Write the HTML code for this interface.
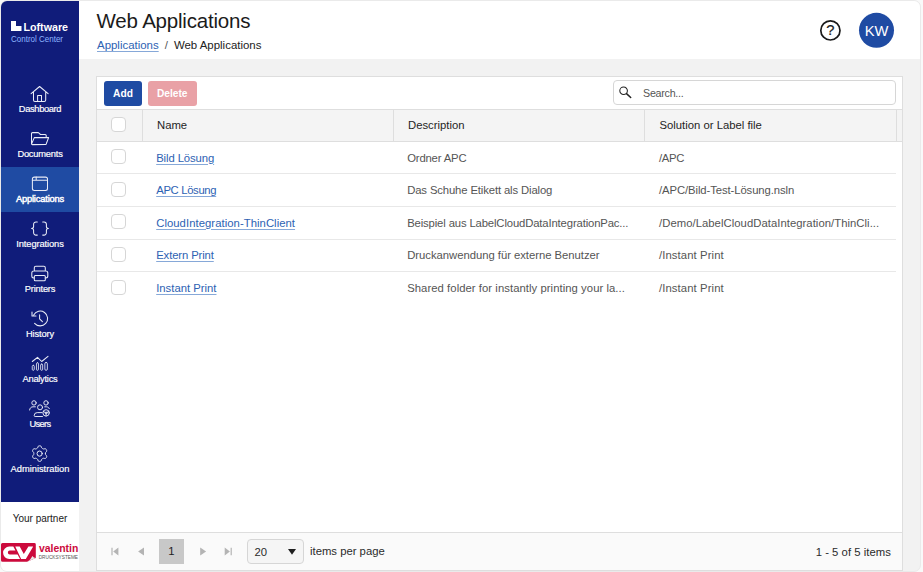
<!DOCTYPE html>
<html lang="en">
<head>
<meta charset="utf-8">
<title>Web Applications</title>
<style>
*{box-sizing:border-box;margin:0;padding:0}
html,body{width:923px;height:572px;overflow:hidden;background:#f9f9f9;font-family:"Liberation Sans",sans-serif;color:#212121}
#frame{position:absolute;left:0;top:0;width:921px;height:572px;border:1px solid #eaeaea;border-radius:7px;background:#f2f2f2;overflow:hidden}
#side{position:absolute;left:0;top:0;width:78px;height:501px;background:#101c7a}
#partner{position:absolute;left:0;top:501px;width:78px;height:71px;background:#fff}
#partner .yp{position:absolute;left:0;top:11px;width:78px;text-align:center;font-size:10px;color:#1a1a1a}
.nav{position:absolute;left:0;width:78px;height:45px;color:#fff;text-align:center}
.navbg{position:absolute;left:0;top:0;width:78px;height:45px;background:#1f4ba3}
.nav svg{position:absolute;left:0;top:0;width:78px;height:45px;fill:none;stroke:#e9ecf7;stroke-width:1.05;stroke-linecap:round;stroke-linejoin:round}
.nav span{position:absolute;left:0;width:78px;top:25px;font-size:9.3px;line-height:11px;letter-spacing:-0.1px;-webkit-text-stroke:0.18px #fff}
#logo{position:absolute;left:9px;top:18px;color:#fff}
#logo b{position:absolute;left:13.5px;top:1.9px;font-size:10.7px;letter-spacing:0px}
#logo i{position:absolute;left:1px;top:16.1px;font-size:8px;font-style:normal;color:#8db4ff;white-space:nowrap;transform:scaleY(1.08);transform-origin:0 50%}
#head{position:absolute;left:78px;top:0;width:843px;height:58px;background:#fff}
#head h1{position:absolute;left:17.6px;top:8px;font-size:20.5px;font-weight:400;color:#1b1b1b;white-space:nowrap;letter-spacing:-0.2px}
#crumb{position:absolute;left:18px;top:38px;font-size:11.45px;white-space:nowrap;color:#222}
#crumb a{color:#2d62b3;text-decoration:underline;text-decoration-color:#86a8d8;text-decoration-thickness:1px;text-underline-offset:1.5px}
#crumb em{font-style:normal;color:#555;margin:0 6px 0 6px}
#help{position:absolute;left:741px;top:19px;width:21px;height:21px;border:1.8px solid #1a1a1a;-webkit-text-stroke:0.3px #1a1a1a;border-radius:50%;text-align:center;font-size:14px;line-height:17.5px;color:#1a1a1a}
#avatar{position:absolute;left:780px;top:11.5px;width:35px;height:35px;border-radius:50%;background:#1f4ba3;color:#fff;text-align:center;font-size:14.5px;line-height:35px}
#grid{position:absolute;left:95px;top:75px;width:807px;height:495px;background:#fff;border:1px solid #dedede}
#tb{position:absolute;left:0;top:0;width:805px;height:33px;background:#fff;border-bottom:1px solid #dedede}
.btn{position:absolute;top:3.5px;height:25px;border-radius:3px;color:#fff;font-size:10.2px;font-weight:700;text-align:center;line-height:25px}
#add{left:7px;width:38px;background:#1f4ba3}
#del{left:51px;width:48.500px;background:#e9a1a6}
#search{position:absolute;left:516px;top:3px;width:283px;height:25px;border:1px solid #d6d6d6;border-radius:4px;background:#fff}
#search span{position:absolute;left:29px;top:5.5px;font-size:10.7px;letter-spacing:-0.25px;color:#555}
#search svg{position:absolute;left:5px;top:4px;width:14px;height:14px}
#gh{position:absolute;left:0;top:33px;width:805px;height:32px;background:#f4f4f4;border-bottom:1px solid #dedede}
.th{position:absolute;top:0;height:31px;font-size:11.3px;line-height:31px;color:#1f1f1f;border-left:1px solid #dedede;padding-left:13px;white-space:nowrap}
.cb{position:absolute;left:14px;width:15px;height:15px;border:1px solid #d6d6d6;border-radius:4px;background:#fff}
.row{position:absolute;left:0;width:798px;height:32px;font-size:11.3px;color:#555}
.ln{position:absolute;left:0;width:799px;height:1px;background:#e8e8e8}
.row div{position:absolute;top:0;line-height:32px;white-space:nowrap}
.row a{color:#2d62b3;text-decoration:underline;text-decoration-color:#86a8d8;text-decoration-thickness:1px;text-underline-offset:1.5px}
#pager{position:absolute;left:0;top:455px;width:805px;height:38px;background:#fafafa;border-top:1px solid #dedede;font-size:11.3px;color:#2b2b2b}
</style>
</head>
<body>
<div id="frame">
  <div id="side">
    <div id="logo">
      <svg width="12" height="10" viewBox="0 0 12 10" style="position:absolute;left:1px;top:2.3px"><path d="M0 0h5v5h5.500v5H0z" fill="#fff"/></svg>
      <b>Loftware</b><i>Control Center</i>
    </div>
    <div class="nav" style="top:78px"><svg viewBox="0 0 78 45"><path d="M30.100 14.700 38.600 7.500l8.500 7.200M32.500 13.200V21a1.500 1.500 0 0 0 1.500 1.500h9.200a1.500 1.500 0 0 0 1.500-1.500V13.200M36.600 22.500v-6.100h3.900v6.100"/></svg><span style="letter-spacing:-0.35px">Dashboard</span></div>
    <div class="nav" style="top:123px"><svg viewBox="0 0 78 45"><path d="M30.500 19.600V9.600a1 1 0 0 1 1-1h5.800l2.200 1.900h4.700a1 1 0 0 1 1 1v1.700M30.600 19.900l2.700-6.300h14.300l-2.400 6.400a1 1 0 0 1-.9.600H31.300a.7.700 0 0 1-.7-.7z"/></svg><span style="letter-spacing:-0.2px">Documents</span></div>
    <div class="navbg" style="top:166px"></div>
    <div class="nav" style="top:168px"><svg viewBox="0 0 78 45"><rect x="31.400" y="8.100" width="15.100" height="13.300" rx="2"/><path d="M31.400 11.300h15.100M35.200 8.100v3.200"/></svg><span style="-webkit-text-stroke:0.45px #fff;letter-spacing:-0.16px">Applications</span></div>
    <div class="nav" style="top:213px"><svg viewBox="0 0 78 45"><path d="M36.300 7.900H35a2.400 2.400 0 0 0-2.400 2.400v2.200a2 2 0 0 1-2 2 2 2 0 0 1 2 2v2.200a2.400 2.400 0 0 0 2.400 2.400h1.300M41.700 7.900H43a2.400 2.400 0 0 1 2.400 2.400v2.200a2 2 0 0 0 2 2 2 2 0 0 0-2 2v2.200a2.400 2.400 0 0 1-2.400 2.400h-1.300"/></svg><span>Integrations</span></div>
    <div class="nav" style="top:258px"><svg viewBox="0 0 78 45"><path d="M33.300 12V8.700a1.500 1.500 0 0 1 1.500-1.500h8a1.500 1.500 0 0 1 1.500 1.500V12M33.300 19h-.5a2 2 0 0 1-2-2v-3a2 2 0 0 1 2-2h12a2 2 0 0 1 2 2v3a2 2 0 0 1-2 2h-.5"/><rect x="33.300" y="16.400" width="11" height="5.400" rx="1"/></svg><span style="letter-spacing:-0.2px">Printers</span></div>
    <div class="nav" style="top:303px"><svg viewBox="0 0 78 45"><path d="M32.700 11A7.400 7.400 0 1 1 33.600 19.300M31 8v4h4M38.600 10.700v4.200l2.800 2.800"/></svg><span>History</span></div>
    <div class="nav" style="top:348px"><svg viewBox="0 0 78 45"><path d="M31.300 12.500 36.500 8.300l4.200 4.200L47 7.400"/><g stroke-width=".85"><rect x="31.250" y="16.300" width="2" height="5" rx="1"/><rect x="35.450" y="13.700" width="2" height="7.600" rx="1"/><rect x="39.650" y="15" width="2" height="6.300" rx="1"/><rect x="43.850" y="13.500" width="2.500" height="7.800" rx="1.200"/></g></svg><span style="letter-spacing:-0.25px">Analytics</span></div>
    <div class="nav" style="top:393px"><svg viewBox="0 0 78 45"><g stroke-width=".95"><circle cx="33" cy="8.900" r="2.200"/><circle cx="45" cy="8.900" r="2.200"/><circle cx="39.050" cy="13.300" r="2.500"/><path d="M28.600 16c.2-2 1.600-3.200 3.400-3.200h2.400M43.700 12.800h1.700c1.400 0 2.400.7 2.900 1.800M41 18.600h-4.800a3 3 0 0 0-3 3 .9.900 0 0 0 .9.900h7.400"/><circle cx="45.100" cy="18.900" r="3.200"/><circle cx="45.100" cy="18.900" r=".9"/><path d="M42.300 17.500l2 1M47.900 17.500l-2 1M45.100 22v-2.200"/></g></svg><span style="letter-spacing:-0.7px">Users</span></div>
    <div class="nav" style="top:438px"><svg viewBox="0 0 78 45"><path stroke-width="1" d="M44.45 14.60 L44.47 14.98 L44.54 15.38 L44.68 15.80 L45.22 16.36 L45.70 16.99 L45.72 17.53 L45.61 18.03 L45.40 18.50 L45.11 18.91 L44.72 19.26 L44.25 19.51 L43.46 19.41 L42.71 19.22 L42.27 19.32 L41.89 19.45 L41.55 19.62 L41.23 19.83 L40.92 20.09 L40.63 20.42 L40.41 21.17 L40.10 21.91 L39.65 22.19 L39.16 22.35 L38.65 22.40 L38.14 22.35 L37.65 22.19 L37.20 21.91 L36.89 21.17 L36.67 20.42 L36.38 20.09 L36.07 19.83 L35.75 19.62 L35.41 19.45 L35.03 19.32 L34.59 19.22 L33.84 19.41 L33.05 19.51 L32.58 19.26 L32.19 18.91 L31.90 18.50 L31.69 18.03 L31.58 17.53 L31.60 16.99 L32.08 16.36 L32.62 15.80 L32.76 15.38 L32.83 14.98 L32.85 14.60 L32.83 14.22 L32.76 13.82 L32.62 13.40 L32.08 12.84 L31.60 12.21 L31.58 11.67 L31.69 11.17 L31.90 10.70 L32.19 10.29 L32.58 9.94 L33.05 9.69 L33.84 9.79 L34.59 9.98 L35.03 9.88 L35.41 9.75 L35.75 9.58 L36.07 9.37 L36.38 9.11 L36.67 8.78 L36.89 8.03 L37.20 7.29 L37.65 7.01 L38.14 6.85 L38.65 6.80 L39.16 6.85 L39.65 7.01 L40.10 7.29 L40.41 8.03 L40.63 8.78 L40.92 9.11 L41.23 9.37 L41.55 9.58 L41.89 9.75 L42.27 9.88 L42.71 9.98 L43.46 9.79 L44.25 9.69 L44.72 9.94 L45.11 10.29 L45.40 10.70 L45.61 11.17 L45.72 11.67 L45.70 12.21 L45.22 12.84 L44.68 13.40 L44.54 13.82 L44.47 14.22z"/><circle stroke-width="1" cx="38.65" cy="14.60" r="2.600"/></svg><span style="letter-spacing:0px">Administration</span></div>
  </div>
  <div id="partner">
    <div class="yp">Your partner</div>
    <svg width="78" height="26" viewBox="0 0 78 26" style="position:absolute;left:0;top:39px">
      <path d="M1.500 2h31.800a1.500 1.500 0 0 1 1.500 1.500v13.400l-8.700 3.900H1.500a1.500 1.500 0 0 1-1.500-1.500V3.500a1.500 1.500 0 0 1 1.500-1.500z" fill="#cc0a3c"/>
      <path d="M26.100 20.800C28.500 19.500 30.200 17.500 31.300 14.900 32.300 16.200 33.500 16.800 34.800 16.900z" fill="#e9e9e9"/>
      <path d="M8.300 5.560H12.300L14.440 9.500H8.800a1.950 1.950 0 0 0 0 3.900H16.550L19.050 18H8.300a6.220 6.220 0 0 1 0-12.440z" fill="#fff"/>
      <path d="M14.250 5.560h4.450l4.100 7.440 4.600-7.440h4.800L24.800 18H20.150z" fill="#fff"/>
      <text x="37.900" y="10.900" font-family="Liberation Sans, sans-serif" font-weight="700" font-size="10" fill="#cc0a3c" textLength="39.400" lengthAdjust="spacingAndGlyphs">valentin</text>
      <text x="37.700" y="17.600" font-family="Liberation Sans, sans-serif" font-size="4.600" fill="#555" textLength="39.300" lengthAdjust="spacingAndGlyphs">DRUCKSYSTEME</text>
    </svg>
  </div>
  <div id="head">
    <h1>Web Applications</h1>
    <div id="crumb"><a>Applications</a><em>/</em>Web Applications</div>
    <svg width="90" height="50" viewBox="0 0 90 50" style="position:absolute;left:731px;top:4px">
      <circle cx="20.400" cy="25.400" r="9.600" fill="none" stroke="#1a1a1a" stroke-width="1.700"/>
      <text x="20.400" y="30.400" text-anchor="middle" font-family="Liberation Sans, sans-serif" font-size="14.800" fill="#1a1a1a" stroke="#1a1a1a" stroke-width=".2">?</text>
      <circle cx="66.500" cy="25.300" r="17.500" fill="#1f4ba3"/>
      <text x="66.500" y="30.700" text-anchor="middle" font-family="Liberation Sans, sans-serif" font-size="14.700" fill="#fff">KW</text>
    </svg>
  </div>
  <div id="grid">
    <div id="tb">
      <div class="btn" id="add">Add</div>
      <div class="btn" id="del">Delete</div>
      <div id="search"><svg viewBox="0 0 14 14"><circle cx="4.600" cy="5.700" r="3.800" fill="none" stroke="#222" stroke-width="1.050"/><path d="M7.500 8.600 11.700 12.500" stroke="#222" stroke-width="1.500" stroke-linecap="round"/></svg><span>Search...</span></div>
    </div>
    <div id="gh">
      <div class="cb" style="top:7px"></div>
      <div class="th" style="left:45px;width:252px;padding-left:14px">Name</div>
      <div class="th" style="left:296px;width:252px;padding-left:14px">Description</div>
      <div class="th" style="left:547px;width:252px;padding-left:14.5px">Solution or Label file</div>
      <div class="th" style="left:799px;width:6px;padding:0"></div>
    </div>
    <div class="row" style="top:64.5px"><span class="cb" style="top:7.5px"></span><div style="left:59.2px"><a style="letter-spacing:-0.1px">Bild Lösung</a></div><div style="left:310.2px;letter-spacing:-0.17px">Ordner APC</div><div style="left:562px;letter-spacing:-0.35px">/APC</div></div>
    <div class="row" style="top:97px"><span class="cb" style="top:7.5px"></span><div style="left:59.2px"><a style="letter-spacing:-0.34px">APC Lösung</a></div><div style="left:310.2px;letter-spacing:-0.13px">Das Schuhe Etikett als Dialog</div><div style="left:562px;letter-spacing:-0.09px">/APC/Bild-Test-Lösung.nsln</div></div>
    <div class="row" style="top:129.5px"><span class="cb" style="top:7.5px"></span><div style="left:59.2px"><a style="letter-spacing:0.05px">CloudIntegration-ThinClient</a></div><div style="left:310.2px;letter-spacing:-0.14px">Beispiel aus LabelCloudDataIntegrationPac...</div><div style="left:562px;letter-spacing:0.04px">/Demo/LabelCloudDataIntegration/ThinCli...</div></div>
    <div class="row" style="top:162px"><span class="cb" style="top:7.5px"></span><div style="left:59.2px"><a style="letter-spacing:-0.12px">Extern Print</a></div><div style="left:310.2px;letter-spacing:-0.03px">Druckanwendung für externe Benutzer</div><div style="left:562px;letter-spacing:0.1px">/Instant Print</div></div>
    <div class="row" style="top:195px"><span class="cb" style="top:7.5px"></span><div style="left:59.2px"><a>Instant Print</a></div><div style="left:310.2px;letter-spacing:0.05px">Shared folder for instantly printing your la...</div><div style="left:562px;letter-spacing:0.1px">/Instant Print</div></div>
    <div class="ln" style="top:96px"></div>
    <div class="ln" style="top:129px"></div>
    <div class="ln" style="top:162px"></div>
    <div class="ln" style="top:194px"></div>
    <div id="pager">
      <svg width="140" height="37" viewBox="0 0 140 37" style="position:absolute;left:0;top:0">
        <path d="M14.400 14.700h1.200v7.600h-1.200zM21.400 14.600v7.800l-5.200-3.900z" fill="#b4b4b4"/>
        <path d="M47 14.600v7.800l-5.900-3.900z" fill="#b4b4b4"/>
        <path d="M103.200 14.600v7.800l5.900-3.900z" fill="#b4b4b4"/>
        <path d="M133.600 14.700h1.200v7.600h-1.200zM127.700 14.600v7.800l5.200-3.900z" fill="#b4b4b4"/>
      </svg>
      <div style="position:absolute;left:62px;top:6px;width:25px;height:24.500px;background:#c8c8c8;text-align:center;line-height:24px;color:#1f1f1f">1</div>
      <div style="position:absolute;left:149.500px;top:5.500px;width:57px;height:25px;border:1px solid #d6d6d6;border-radius:4px;background:#f5f5f5;line-height:24px;padding-left:7px">20<svg width="8" height="6" viewBox="0 0 8 6" style="position:absolute;left:40.500px;top:9.500px"><path d="M0 0h8L4 5.800z" fill="#1f1f1f"/></svg></div>
      <div style="position:absolute;left:213px;top:0;line-height:37px">items per page</div>
      <div style="position:absolute;right:11px;top:1px;line-height:37px;letter-spacing:0.04px">1 - 5 of 5 items</div>
    </div>
  </div>
</div>
</body>
</html>
